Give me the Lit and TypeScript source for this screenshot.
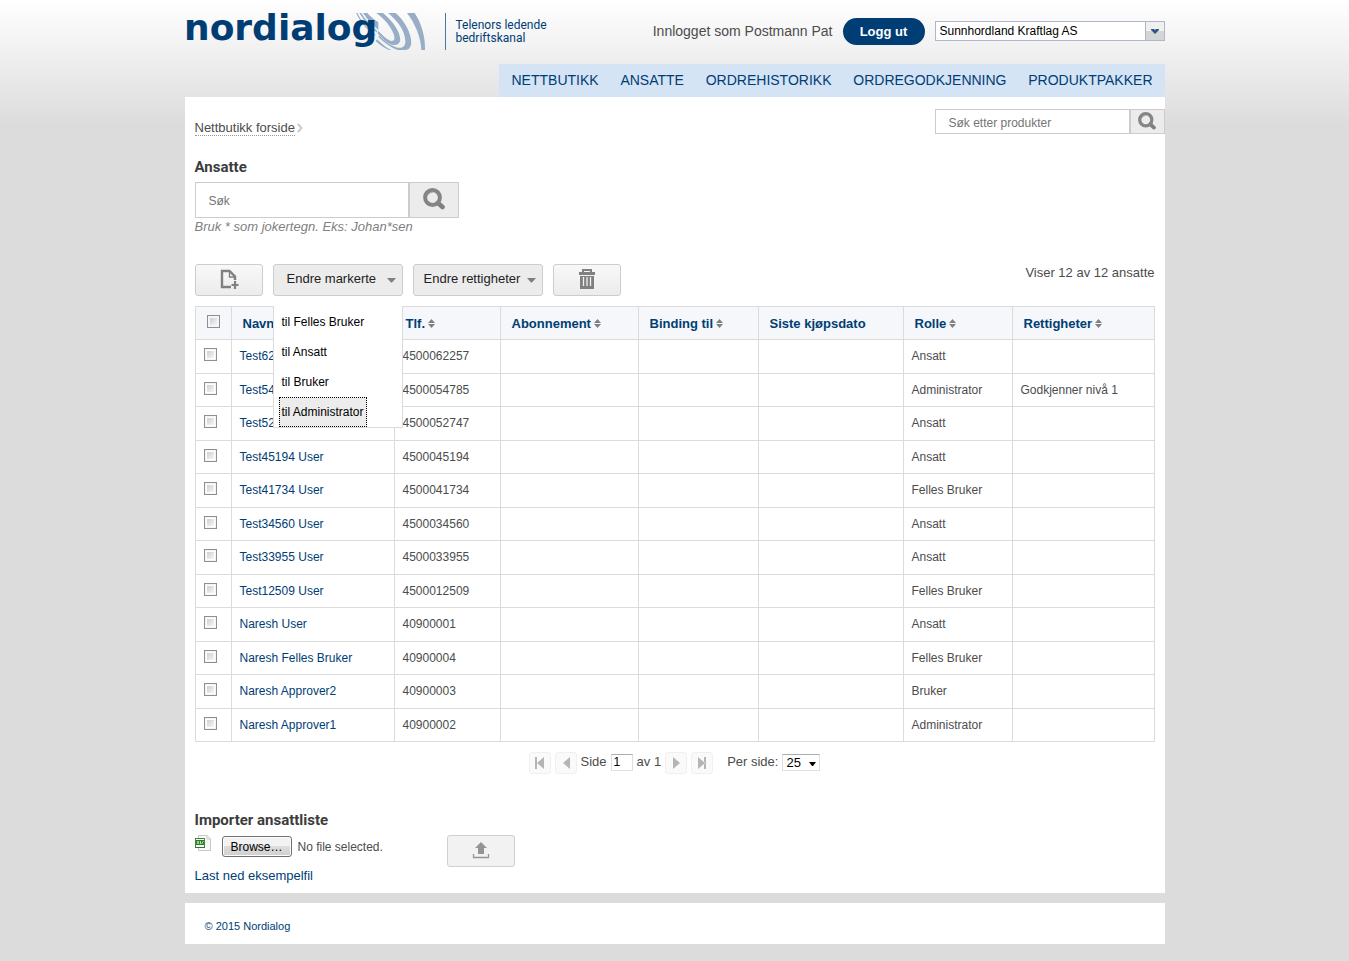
import { LitElement, html, css, nothing } from "lit";
import { customElement, property, state } from "lit/decorators.js";

interface Employee {
  name: string;
  phone: string;
  role: string;
  rights?: string;
}

const EMPLOYEES: Employee[] = [
  { name: "Test62257 User", phone: "4500062257", role: "Ansatt" },
  { name: "Test54785 User", phone: "4500054785", role: "Administrator", rights: "Godkjenner nivå 1" },
  { name: "Test52747 User", phone: "4500052747", role: "Ansatt" },
  { name: "Test45194 User", phone: "4500045194", role: "Ansatt" },
  { name: "Test41734 User", phone: "4500041734", role: "Felles Bruker" },
  { name: "Test34560 User", phone: "4500034560", role: "Ansatt" },
  { name: "Test33955 User", phone: "4500033955", role: "Ansatt" },
  { name: "Test12509 User", phone: "4500012509", role: "Felles Bruker" },
  { name: "Naresh User", phone: "40900001", role: "Ansatt" },
  { name: "Naresh Felles Bruker", phone: "40900004", role: "Felles Bruker" },
  { name: "Naresh Approver2", phone: "40900003", role: "Bruker" },
  { name: "Naresh Approver1", phone: "40900002", role: "Administrator" },
];

const COLUMNS = [
  { label: "Navn", cls: "c-name", sortable: true },
  { label: "Tlf.", cls: "c-phone", sortable: true },
  { label: "Abonnement", cls: "c-sub", sortable: true },
  { label: "Binding til", cls: "c-bind", sortable: true },
  { label: "Siste kjøpsdato", cls: "c-date", sortable: false },
  { label: "Rolle", cls: "c-role", sortable: true },
  { label: "Rettigheter", cls: "c-rights", sortable: true },
];

const NAV = ["Nettbutikk", "Ansatte", "Ordrehistorikk", "Ordregodkjenning", "Produktpakker"];

const base = css`
  * {
    box-sizing: border-box;
  }
  button,
  input,
  select {
    font-family: inherit;
    margin: 0;
    border-radius: 0;
  }
  a {
    color: #003d75;
    text-decoration: none;
  }
  svg {
    display: block;
  }
`;

const magnifier = (size: number) => html`
  <svg width=${size} height=${size} viewBox="0 0 22 22" aria-hidden="true">
    <path d="M15 15 L19.5 19" stroke="#7f7f7f" stroke-width="4.6" stroke-linecap="round" />
    <circle cx="9.5" cy="9.5" r="7.4" fill="none" stroke="#858585" stroke-width="4" />
    <path d="M4.5 7.5 A6 6 0 0 1 10 4" fill="none" stroke="#a6a6a6" stroke-width="1" />
  </svg>
`;

@customElement("site-header")
class SiteHeader extends LitElement {
  static styles = [
    base,
    css`
      :host {
        display: block;
      }
      .top {
        display: flex;
        height: 64px;
      }
      .brand {
        display: flex;
        flex: 1;
      }
      .logo text {
        font: bold 36px "DejaVu Sans", sans-serif;
        fill: #003d75;
      }
      .slogan {
        margin: 13px 0 0 15px;
        padding: 6px 0 0 10px;
        height: 37px;
        border-left: 1px solid #3f7cad;
        color: #003d75;
        font: 12px/13px Roboto, sans-serif;
      }
      .user {
        display: flex;
        align-items: center;
        gap: 10px;
        height: 62px;
        color: #4c4c4c;
        font-size: 14px;
      }
      .logout {
        width: 82px;
        height: 27px;
        border: 0;
        border-radius: 14px;
        background: #003d75;
        color: #fff;
        font-size: 13px;
        font-weight: bold;
      }
      .company {
        position: relative;
        width: 230px;
        height: 20px;
      }
      .company select {
        width: 100%;
        height: 100%;
        appearance: none;
        padding: 0 20px 0 4px;
        border: 1px solid #b3b3cc;
        background: #fff;
        color: #000;
        font-size: 12px;
      }
      .arrow {
        position: absolute;
        top: 1px;
        right: 1px;
        width: 19px;
        height: 18px;
        border-left: 1px solid #b3b3cc;
        background: linear-gradient(#eff1ef 50%, #d3d7d3 50%);
        pointer-events: none;
      }
      nav {
        display: flex;
        justify-content: space-between;
        width: 666px;
        max-width: 100%;
        margin-left: auto;
        padding: 0 12px 0 13px;
        background: #d4e4f4;
        font-size: 14px;
        line-height: 33px;
        text-transform: uppercase;
      }
    `,
  ];

  render() {
    return html`
      <header>
        <div class="top">
          <div class="brand">
            <svg class="logo" width="245" height="52" role="img" aria-label="nordialog">
              <g transform="scale(0.3333) translate(-30 0)" fill="#97aec6">
                <path d="M696 39 H719 C738 66 752 112 750 150 H739 C738 112 720 70 696 39 Z" />
                <path d="M639 39 H662 C688 62 710 100 709 130 C707 143 701 150 692 150 H668 C649 144 630 130 611 112 L611 106 C630 125 652 140 668 143 C684 145 692 138 691 122 C690 92 668 62 639 39 Z" />
                <path d="M604 39 H624 C650 60 676 94 676 120 C674 133 664 138 650 134 C636 130 622 116 608 100 L610 92 C624 108 640 121 650 123 C660 123 660 114 656 102 C648 80 628 56 604 39 Z" />
                <path d="M564 39 H577 C584 48 596 58 610 66 V90 C592 74 576 58 564 39 Z" />
                <path d="M553 39 H559 C570 58 588 76 606 92 V98 C586 82 566 62 553 39 Z" />
                <path d="M543 39 H547 C558 62 576 84 602 104 V107 C576 90 556 66 543 39 Z" />
                <path d="M606 118 C620 132 634 143 648 150 H642 C628 144 614 134 602 123 Z" />
              </g>
              <text x="-1" y="40">nordialog</text>
            </svg>
            <div class="slogan">Telenors ledende<br />bedriftskanal</div>
          </div>
          <div class="user">
            <span>Innlogget som Postmann Pat</span>
            <button class="logout">Logg ut</button>
            <div class="company">
              <select aria-label="Firma">
                <option>Sunnhordland Kraftlag AS</option>
              </select>
              <span class="arrow">
                <svg width="18" height="18" aria-hidden="true">
                  <path d="M5 7 H8 L9 8 L10 7 H13 V8 L9 12 L5 8 Z" fill="#31558b" />
                </svg>
              </span>
            </div>
          </div>
        </div>
        <nav>${NAV.map((item) => html`<a href="#">${item}</a>`)}</nav>
      </header>
    `;
  }
}

@customElement("employee-toolbar")
class EmployeeToolbar extends LitElement {
  @state() private open = true;

  static styles = [
    base,
    css`
      :host {
        display: flex;
        align-items: flex-start;
        gap: 10px;
      }
      .tool,
      .drop {
        height: 32px;
        border: 1px solid #ccc;
        border-radius: 3px;
        background: linear-gradient(#f8f8f8, #ececec);
      }
      .tool {
        display: flex;
        align-items: center;
        justify-content: center;
        width: 68px;
        padding: 0 0 2px;
      }
      .drop {
        display: flex;
        align-items: center;
        justify-content: space-between;
        width: 130px;
        padding: 0 6px 3px 10px;
        background: #ececec;
        color: #222;
        font-size: 13px;
        white-space: nowrap;
      }
      .wide {
        padding-left: 13px;
      }
      .caret {
        margin-top: 4px;
      }
      .holder {
        position: relative;
      }
      .menu {
        position: absolute;
        top: 42px;
        left: 0;
        z-index: 1;
        width: 130px;
        margin: 0;
        padding: 1px 5px 0;
        border: 1px solid #dbdbdb;
        border-top: 0;
        background: #fff;
        list-style: none;
      }
      .menu li {
        display: flex;
      }
      .menu button {
        height: 30px;
        padding: 0 2px;
        border: 1px solid transparent;
        background: none;
        color: #000;
        font-size: 12px;
        white-space: nowrap;
      }
      .menu .current {
        border: 1px dotted #000;
        background: #ececec;
      }
      .count {
        flex: 1;
        color: #4c4c4c;
        font-size: 13px;
        line-height: 18px;
        text-align: right;
      }
    `,
  ];

  private caret() {
    return html`<svg class="caret" width="9" height="5" aria-hidden="true">
      <path d="M0 0 H9 L5 4.5 H4 Z" fill="#808080" />
    </svg>`;
  }

  render() {
    const items = ["til Felles Bruker", "til Ansatt", "til Bruker", "til Administrator"];
    return html`
      <button class="tool" aria-label="Ny ansatt">
        <svg width="20" height="20" aria-hidden="true">
          <path d="M12 18 H3 V2 H10.5 L16 7.5 V11" fill="none" stroke="#808080" stroke-width="2.4" />
          <path d="M10.5 2 V8 H16" fill="none" stroke="#808080" stroke-width="1.4" />
          <path d="M16 12 V20 M12.5 16 H19.5" stroke="#808080" stroke-width="2.2" />
        </svg>
      </button>
      <div class="holder">
        <button class="drop wide" aria-expanded=${this.open} @click=${() => (this.open = !this.open)}>
          Endre markerte ${this.caret()}
        </button>
        ${this.open
          ? html`<ul class="menu">
              ${items.map(
                (item, i) => html`<li><button class=${i === 3 ? "current" : ""}>${item}</button></li>`
              )}
            </ul>`
          : nothing}
      </div>
      <button class="drop">Endre rettigheter ${this.caret()}</button>
      <button class="tool" aria-label="Slett">
        <svg width="18" height="20" aria-hidden="true">
          <path d="M5 3 V1 H13 V3" fill="none" stroke="#808080" stroke-width="2" />
          <path d="M1 3 H17 V6 H1 Z M2 7 H16 V20 H2 Z" fill="#808080" />
          <path d="M5.5 8 V17 M9 8 V17 M12.5 8 V17" stroke="#f0f0f0" stroke-width="1.3" />
        </svg>
      </button>
      <div class="count">Viser 12 av 12 ansatte</div>
    `;
  }
}

@customElement("employee-table")
class EmployeeTable extends LitElement {
  @property({ attribute: false }) rows: Employee[] = [];

  static styles = [
    base,
    css`
      :host {
        display: block;
      }
      table {
        width: 100%;
        table-layout: fixed;
        border-collapse: collapse;
        color: #4c4c4c;
        font-size: 12px;
      }
      th,
      td {
        padding: 0 8px 1px;
        border: 1px solid #dbdbdb;
        text-align: left;
        white-space: nowrap;
      }
      th {
        height: 33px;
        padding: 0 11px;
        background: #f5f7fa;
        color: #003d75;
        font-size: 13px;
      }
      .c-check {
        width: 36px;
      }
      .c-name {
        width: 163px;
      }
      .c-phone {
        width: 106px;
      }
      .c-sub {
        width: 138px;
      }
      .c-bind {
        width: 120px;
      }
      .c-date {
        width: 145px;
      }
      .c-role {
        width: 109px;
      }
      tbody tr {
        height: 33px;
      }
      tbody tr:nth-child(odd) {
        height: 34px;
      }
      .head {
        display: flex;
        align-items: center;
        gap: 3px;
      }
      input {
        display: block;
        width: 13px;
        height: 13px;
        margin-bottom: 3px;
        appearance: none;
        border: 1px solid #8e8f8f;
        background: linear-gradient(135deg, #cbcfd5, #f6f6f6) content-box;
        padding: 2px;
        box-shadow: inset 0 0 0 1px #f4f4f4;
      }
      input:checked {
        background: #003d75 content-box;
      }
    `,
  ];

  render() {
    return html`
      <table>
        <thead>
          <tr>
            <th class="c-check"><input type="checkbox" aria-label="Velg alle" /></th>
            ${COLUMNS.map(
              (c) => html`<th class=${c.cls} scope="col">
                <span class="head"
                  >${c.label}${c.sortable
                    ? html`<svg width="7" height="9" aria-hidden="true">
                        <path d="M0 4 L3.5 0 L7 4 Z M0 5 H7 L3.5 9 Z" fill="#808080" />
                      </svg>`
                    : nothing}</span
                >
              </th>`
            )}
          </tr>
        </thead>
        <tbody>
          ${this.rows.map(
            (r) => html`<tr>
              <td><input type="checkbox" aria-label=${r.name} /></td>
              <td><a href="#">${r.name}</a></td>
              <td>${r.phone}</td>
              <td></td>
              <td></td>
              <td></td>
              <td>${r.role}</td>
              <td>${r.rights ?? ""}</td>
            </tr>`
          )}
        </tbody>
      </table>
    `;
  }
}

@customElement("page-controls")
class PageControls extends LitElement {
  static styles = [
    base,
    css`
      :host {
        display: flex;
        align-items: center;
        justify-content: center;
        gap: 4px;
        color: #4c4c4c;
        font-size: 13px;
        line-height: 20px;
      }
      .step {
        width: 22px;
        height: 22px;
        padding: 0 4px;
        border: 1px solid #f0f0f0;
        border-radius: 3px;
        background: #fafafa;
      }
      .number {
        width: 22px;
        height: 17px;
        padding: 0 2px;
        border: 1px solid #dbdfe6;
        border-top-color: #abadb3;
        color: #000;
        font-size: 12px;
      }
      label,
      span,
      .number {
        margin-bottom: 2px;
      }
      .per {
        margin-left: 10px;
      }
      .size {
        position: relative;
      }
      .size select {
        display: block;
        width: 38px;
        height: 17px;
        padding: 0 3px;
        appearance: none;
        border: 1px solid #dbdfe6;
        border-top-color: #abadb3;
        background: #fff;
        color: #000;
        font-size: 13px;
        line-height: 15px;
      }
      .size svg {
        position: absolute;
        top: 8px;
        right: 4px;
        pointer-events: none;
      }
    `,
  ];

  private step(label: string, d: string) {
    return html`<button class="step" aria-label=${label}>
      <svg width="12" height="14" aria-hidden="true"><path d=${d} fill="#b5b5b5" /></svg>
    </button>`;
  }

  render() {
    return html`
      ${this.step("Første side", "M1 1 H3 V13 H1 Z M10 1 V13 L3 7 Z")}
      ${this.step("Forrige side", "M10 1 V13 L3 7 Z")}
      <label for="page">Side</label>
      <input class="number" id="page" value="1" />
      <span>av 1</span>
      ${this.step("Neste side", "M3 1 V13 L10 7 Z")}
      ${this.step("Siste side", "M2 1 V13 L9 7 Z M8 1 H10 V13 H8 Z")}
      <label class="per" for="per">Per side:</label>
      <span class="size">
        <select id="per">
          <option>25</option>
        </select>
        <svg width="7" height="4" aria-hidden="true"><path d="M0 0 H7 L4 4 H3 Z" fill="#000" /></svg>
      </span>
    `;
  }
}

@customElement("import-list")
class ImportList extends LitElement {
  static styles = [
    base,
    css`
      :host {
        display: block;
        color: #4c4c4c;
        font-size: 13px;
      }
      .line {
        display: flex;
        height: 32px;
      }
      .picker {
        position: relative;
        display: flex;
        align-items: center;
        gap: 6px;
        width: 225px;
        height: 23px;
        margin-left: 11px;
        font-size: 12px;
      }
      .picker input {
        position: absolute;
        inset: 0;
        width: 100%;
        opacity: 0;
      }
      .browse {
        width: 70px;
        height: 21px;
        border: 1px solid #707070;
        border-radius: 3px;
        background: linear-gradient(#f2f2f2 50%, #ddd 50%, #cfcfcf);
        box-shadow: inset 0 0 0 1px #fcfcfc;
        color: #000;
        line-height: 20px;
        text-align: center;
      }
      .upload {
        display: flex;
        align-items: center;
        justify-content: center;
        width: 68px;
        height: 32px;
        padding: 0 0 2px;
        border: 1px solid #d0d0d0;
        border-radius: 3px;
        background: #f2f2f2;
      }
      .example {
        display: inline-block;
        line-height: 18px;
      }
    `,
  ];

  render() {
    return html`
      <div class="line">
        <svg width="16" height="16" aria-hidden="true">
          <path d="M3.5 0.5 H12 L15.5 4 V15.5 H3.5 Z" fill="#fafafa" stroke="#c9c9c9" />
          <path d="M12 0.5 V4 H15.5" fill="none" stroke="#c9c9c9" />
          <rect x="0.5" y="3.5" width="9" height="9" fill="#fff" stroke="#3c8a35" />
          <rect x="1" y="5" width="8" height="5" fill="#2f7a2a" />
          <path d="M2 6 L4 9 M4 6 L2 9 M5.5 6 V9 M8.5 6 L6.5 9" stroke="#d8efd4" stroke-width="0.8" />
          <rect x="0" y="12" width="10" height="1" fill="#2f7a2a" />
        </svg>
        <label class="picker">
          <input type="file" />
          <span class="browse">Browse…</span>
          <span>No file selected.</span>
        </label>
        <button class="upload" aria-label="Last opp">
          <svg width="18" height="18" aria-hidden="true">
            <path d="M9 1 L15 7 H12 V13 H6 V7 H3 Z" fill="#949494" />
            <path d="M1.5 13 V16.5 H16.5 V13" fill="none" stroke="#949494" stroke-width="1.3" />
          </svg>
        </button>
      </div>
      <a class="example" href="#">Last ned eksempelfil</a>
    `;
  }
}

@customElement("app-root")
class AppRoot extends LitElement {
  static styles = [
    base,
    css`
      :host {
        display: block;
        box-sizing: border-box;
        min-height: 100vh;
        padding-bottom: 17px;
        background: #dcdcdc linear-gradient(#fff, #dcdcdc 125px) no-repeat 0 0 / 100% 125px;
        font-family: "Liberation Sans", Arial, sans-serif;
      }
      .page {
        max-width: 980px;
        margin: 0 auto;
      }
      main {
        padding: 0 10px 8px;
        background: #fff;
      }
      .strip {
        display: flex;
        justify-content: space-between;
        margin-right: -10px;
        padding-top: 12px;
      }
      .crumb {
        display: flex;
        align-items: center;
        gap: 2px;
        height: 38px;
        font-size: 13px;
      }
      .crumb a {
        border-bottom: 1px dotted #999;
        color: #4c4c4c;
        line-height: 15px;
      }
      .search {
        display: flex;
      }
      .search input {
        padding: 2px 13px 0;
        border: 1px solid #ccc;
        background: #fff;
        font-size: 12px;
      }
      .search input::placeholder {
        color: #757575;
      }
      .search button {
        display: grid;
        place-items: center;
        padding: 0 0 2px;
        border: 1px solid #ccc;
        background: #ececec;
      }
      .products input {
        width: 195px;
        height: 25px;
      }
      .products button {
        width: 35px;
        height: 25px;
      }
      .people input {
        width: 214px;
        height: 36px;
      }
      .people button {
        width: 50px;
        height: 36px;
      }
      h2 {
        margin: 0;
        color: #3c3c3c;
        font: bold 15px/20px Roboto, sans-serif;
      }
      .first {
        margin: 10px 0 5px;
      }
      .hint {
        margin: 0 0 28px;
        color: #808080;
        font-size: 13px;
        font-style: italic;
        line-height: 18px;
      }
      employee-table {
        margin-top: 10px;
      }
      page-controls {
        margin: 10px 0 36px;
      }
      import-list {
        margin-top: 5px;
      }
      footer {
        margin-top: 10px;
        padding: 15px 20px 10px;
        background: #fff;
        color: #003d75;
        font-size: 11px;
        line-height: 16px;
      }
    `,
  ];

  render() {
    return html`
      <div class="page">
        <site-header></site-header>
        <main>
          <div class="strip">
            <div class="crumb">
              <a href="#">Nettbutikk forside</a>
              <svg width="6" height="10" aria-hidden="true">
                <path d="M1 1 L4.5 5 L1 9" fill="none" stroke="#ccc" stroke-width="2" />
              </svg>
            </div>
            <form class="search products">
              <input placeholder="Søk etter produkter" aria-label="Søk etter produkter" />
              <button type="button" aria-label="Søk">${magnifier(18)}</button>
            </form>
          </div>
          <h2 class="first">Ansatte</h2>
          <form class="search people">
            <input placeholder="Søk" aria-label="Søk ansatte" />
            <button type="button" aria-label="Søk">${magnifier(22)}</button>
          </form>
          <p class="hint">Bruk * som jokertegn. Eks: Johan*sen</p>
          <employee-toolbar></employee-toolbar>
          <employee-table .rows=${EMPLOYEES}></employee-table>
          <page-controls></page-controls>
          <h2>Importer ansattliste</h2>
          <import-list></import-list>
        </main>
        <footer>© 2015 Nordialog</footer>
      </div>
    `;
  }
}
